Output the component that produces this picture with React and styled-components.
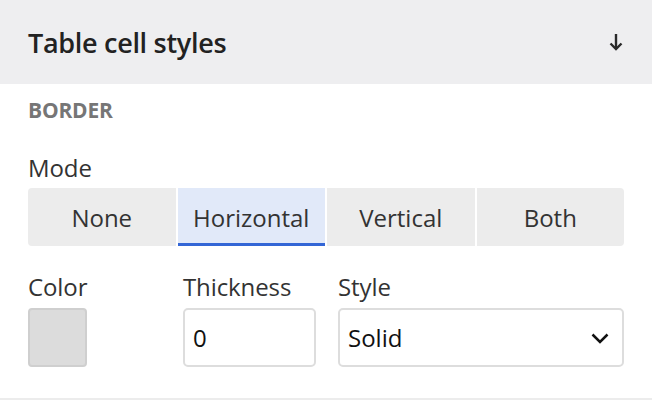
import styled, { createGlobalStyle } from "styled-components"

const GlobalStyle = createGlobalStyle`
  body {
    margin: 0;
    background: #fff;
    font-family: "Open Sans", "Liberation Sans", sans-serif;
  }
`

const Panel = styled.div`
  width: 652px;
  height: 408px;
  display: flex;
  flex-direction: column;
  background: #fff;
  overflow: hidden;
`

const Header = styled.div`
  height: 84px;
  flex-shrink: 0;
  background: #eeeef0;
  display: flex;
  align-items: center;
  justify-content: space-between;
  padding: 0 29px 0 28px;
`

const Title = styled.h2`
  margin: 0;
  font-size: 27px;
  font-weight: 600;
  color: #222;
  letter-spacing: -0.3px;
`

const Body = styled.div`
  display: flex;
  flex-direction: column;
  padding: 12px 28px 0 28px;
  border-bottom: 2px solid #ececec;
  height: 316px;
  box-sizing: border-box;
`

const Section = styled.div`
  font-size: 21px;
  font-weight: 700;
  color: #767676;
  height: 28px;
  line-height: 28px;
  letter-spacing: -0.2px;
`

const Label = styled.div`
  font-size: 24px;
  color: #333;
  height: 28px;
  line-height: 28px;
  letter-spacing: -0.1px;
  margin-top: ${p => p.$top || 0}px;
  margin-bottom: ${p => p.$gap || 6}px;
`

const Segments = styled.div`
  display: flex;
  gap: 2px;
  border-radius: 4px;
  overflow: hidden;
`

const Segment = styled.button`
  flex: 1;
  height: 58px;
  border: none;
  padding: 0;
  font-family: inherit;
  font-size: 24px;
  letter-spacing: 0;
  color: #333;
  background: ${p => (p.$active ? "#e1e9f9" : "#ececec")};
  box-shadow: ${p => (p.$active ? "inset 0 -3px 0 #3366d6" : "none")};
`

const Fields = styled.div`
  display: flex;
  gap: 22px;
  margin-top: 27px;
`

const Field = styled.div`
  display: flex;
  flex-direction: column;
  width: ${p => (p.$grow ? "auto" : p.$w + "px")};
  flex: ${p => (p.$grow ? 1 : "none")};
`

const Swatch = styled.div`
  width: 59px;
  height: 59px;
  box-sizing: border-box;
  background: #dcdcdc;
  border: 2px solid #cfcfcf;
  border-radius: 4px;
`

const Box = styled.div`
  height: 59px;
  box-sizing: border-box;
  border: 2px solid #dddddd;
  border-radius: 5px;
  display: flex;
  align-items: center;
  justify-content: space-between;
  padding: 0 12px 0 8px;
  font-size: 24px;
  color: #111;
`

const Arrow = () => (
  <svg width="14" height="18" viewBox="0 0 14 18" fill="none" stroke="#2a2a2a" strokeWidth="2.4">
    <path d="M7 1v15" />
    <path d="M1.5 10.5L7 16l5.5-5.5" />
  </svg>
)

const Chevron = () => (
  <svg width="20" height="13" viewBox="0 0 20 13" fill="none" stroke="#111" strokeWidth="2.5">
    <path d="M2.5 3.5l7.5 7.5 7.5-7.5" />
  </svg>
)

const modes = ["None", "Horizontal", "Vertical", "Both"]

export default function App() {
  return (
    <Panel>
      <GlobalStyle />
      <Header>
        <Title>Table cell styles</Title>
        <Arrow />
      </Header>
      <Body>
        <Section>BORDER</Section>
        <Label $top={30}>Mode</Label>
        <Segments>
          {modes.map(m => (
            <Segment key={m} $active={m === "Horizontal"}>{m}</Segment>
          ))}
        </Segments>
        <Fields>
          <Field $w={133}>
            <Label $gap={7}>Color</Label>
            <Swatch />
          </Field>
          <Field $w={133}>
            <Label $gap={7}>Thickness</Label>
            <Box>0</Box>
          </Field>
          <Field $grow>
            <Label $gap={7}>Style</Label>
            <Box>
              Solid
              <Chevron />
            </Box>
          </Field>
        </Fields>
      </Body>
    </Panel>
  )
}
